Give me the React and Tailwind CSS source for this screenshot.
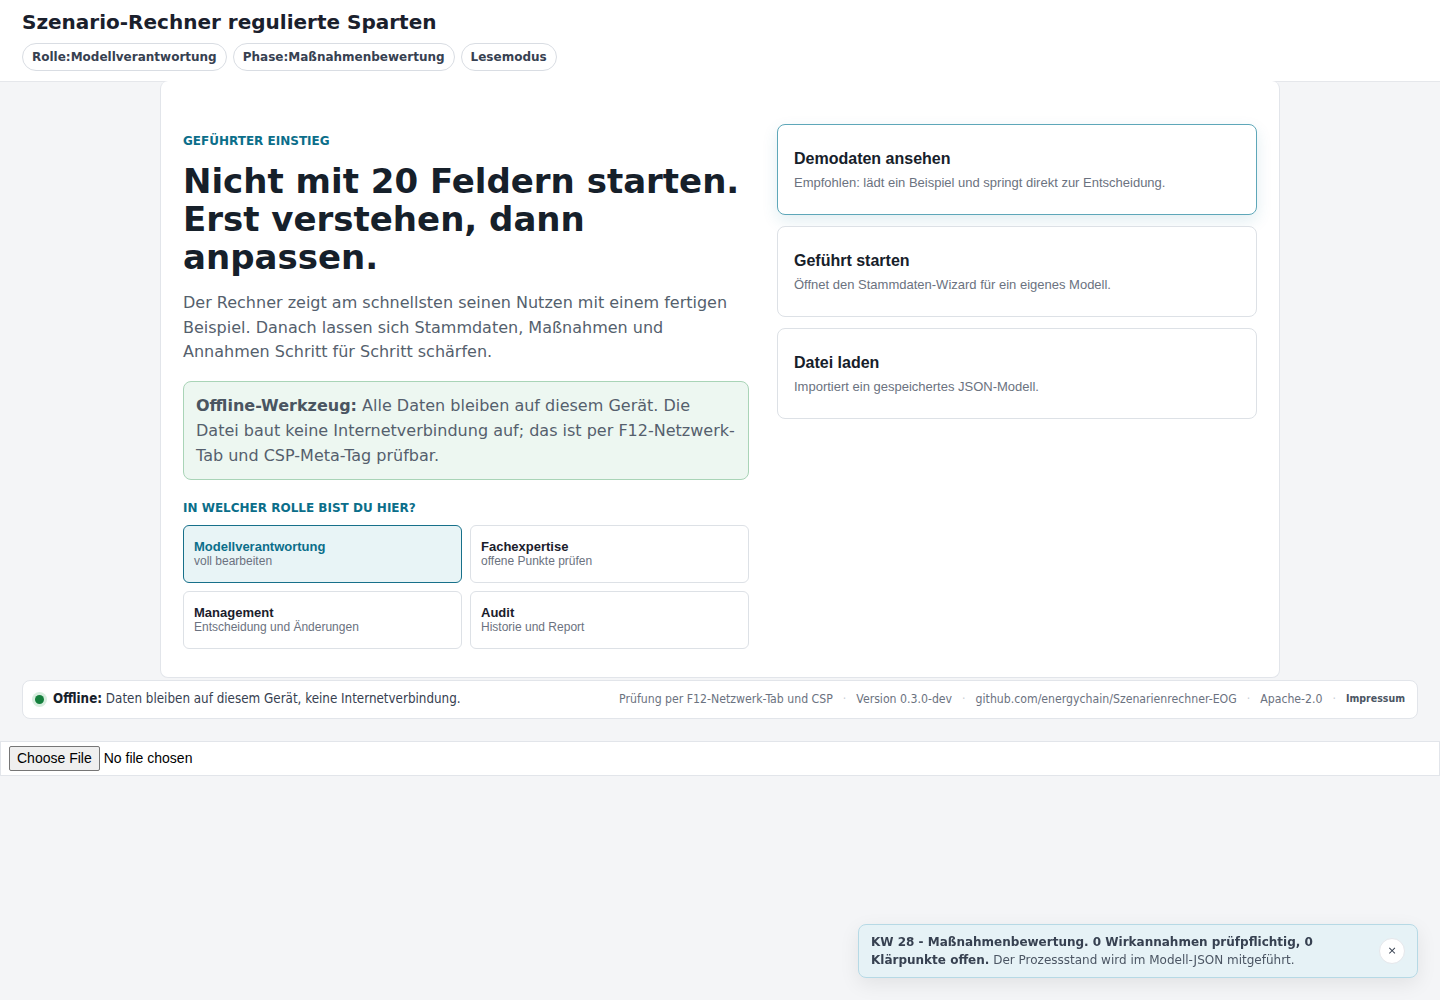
import React from "react";

const roles = [
  { title: "Modellverantwortung", desc: "voll bearbeiten", active: true },
  { title: "Fachexpertise", desc: "offene Punkte prüfen" },
  { title: "Management", desc: "Entscheidung und Änderungen" },
  { title: "Audit", desc: "Historie und Report" },
];

const starts = [
  { title: "Demodaten ansehen", desc: "Empfohlen: lädt ein Beispiel und springt direkt zur Entscheidung.", primary: true },
  { title: "Geführt starten", desc: "Öffnet den Stammdaten-Wizard für ein eigenes Modell." },
  { title: "Datei laden", desc: "Importiert ein gespeichertes JSON-Modell." },
];

const footerLinks = [
  "Prüfung per F12-Netzwerk-Tab und CSP",
  "Version 0.3.0-dev",
  "github.com/energychain/Szenarienrechner-EOG",
  "Apache-2.0",
];

const App = () => {
  return (
    <div className="min-h-[1000px] bg-[#f4f5f7] font-['DejaVu_Sans',sans-serif] text-[#1f2933]">
      {/* Kopfzeile */}
      <header className="h-[82px] border-b border-[#e5e7eb] bg-white px-[22px] pt-[9px]">
        <h1 className="text-[20px] font-bold leading-[26px] text-[#1a202c]">
          Szenario-Rechner regulierte Sparten
        </h1>
        <div className="mt-[8px] flex gap-[6px]">
          {["Rolle:Modellverantwortung", "Phase:Maßnahmenbewertung", "Lesemodus"].map((p) => (
            <span
              key={p}
              className="rounded-full border border-[#d9dde3] bg-white px-[9px] py-[5px] text-[12px] font-bold leading-[16px] text-[#374151]"
            >
              {p}
            </span>
          ))}
        </div>
      </header>

      {/* Einstieg */}
      <main className="mx-auto -mt-px w-[1120px] rounded-lg border border-t-0 border-[#e2e5ea] bg-white px-[22px] pb-[28px] pt-[43px]">
        <div className="grid grid-cols-[566px_480px] gap-[28px]">
          <section className="pt-[9px]">
            <p className="text-[12px] font-bold uppercase leading-[16px] text-[#0b6e8a]">
              Geführter Einstieg
            </p>
            <h2 className="mt-[13px] text-[34px] font-bold leading-[38px] text-[#16202a]">
              Nicht mit 20 Feldern starten. Erst verstehen, dann anpassen.
            </h2>
            <p className="mt-[15px] text-[16px] leading-[24.5px] text-[#555f6d]">
              Der Rechner zeigt am schnellsten seinen Nutzen mit einem fertigen Beispiel. Danach lassen sich
              Stammdaten, Maßnahmen und Annahmen Schritt für Schritt schärfen.
            </p>
            <div className="mt-[16px] rounded-lg border border-[#a9d4b7] bg-[#edf7f1] px-[12px] py-[11px] text-[16px] leading-[25px] text-[#555f6d]">
              <strong className="text-[#4a5561]">Offline-Werkzeug:</strong> Alle Daten bleiben auf diesem Gerät.
              Die Datei baut keine Internetverbindung auf; das ist per F12-Netzwerk-Tab und CSP-Meta-Tag prüfbar.
            </div>
            <p className="mt-[20px] text-[12px] font-bold uppercase leading-[16px] text-[#0b6e8a]">
              In welcher Rolle bist du hier?
            </p>
            <div className="mt-[9px] grid grid-cols-2 gap-[8px]">
              {roles.map((r) => (
                <button
                  key={r.title}
                  className={
                    r.active
                      ? "h-[58px] rounded-md border border-[#17708a] bg-[#e8f4f6] px-[10px] text-left font-['Liberation_Sans',Arial,sans-serif]"
                      : "h-[58px] rounded-md border border-[#dde1e6] bg-white px-[10px] text-left font-['Liberation_Sans',Arial,sans-serif]"
                  }
                >
                  <div
                    className={
                      r.active
                        ? "text-[13px] font-bold leading-[14px] text-[#0b6e8a]"
                        : "text-[13px] font-bold leading-[14px] text-[#1a202c]"
                    }
                  >
                    {r.title}
                  </div>
                  <div className="text-[12px] leading-[14px] text-[#6b7280]">{r.desc}</div>
                </button>
              ))}
            </div>
          </section>

          <section className="flex flex-col gap-[11px]">
            {starts.map((s) => (
              <button
                key={s.title}
                className={
                  s.primary
                    ? "h-[91px] rounded-lg border border-[#5ea7b9] bg-white px-[16px] text-left font-['Liberation_Sans',Arial,sans-serif] shadow-[0_6px_16px_rgba(14,116,144,0.12)]"
                    : "h-[91px] rounded-lg border border-[#dde1e6] bg-white px-[16px] text-left font-['Liberation_Sans',Arial,sans-serif]"
                }
              >
                <div className="text-[16px] font-bold leading-[20px] text-[#16202a]">{s.title}</div>
                <div className="mt-[6px] text-[13px] leading-[16px] text-[#6b7280]">{s.desc}</div>
              </button>
            ))}
          </section>
        </div>
      </main>

      {/* Statusleiste */}
      <footer className="mx-[22px] mt-[2px] flex h-[39px] items-center justify-between rounded-lg border border-[#e2e5ea] bg-white px-[12px] font-['DejaVu_Sans_Condensed','DejaVu_Sans',sans-serif]">
        <div className="flex items-center gap-[9px] text-[13.3px] text-[#374151]">
          <span className="h-[9px] w-[9px] rounded-full bg-[#15803d] ring-[3px] ring-[#d8eedf]" />
          <span>
            <strong className="text-[#16202a]">Offline:</strong> Daten bleiben auf diesem Gerät, keine Internetverbindung.
          </span>
        </div>
        <div className="flex items-center gap-[10px] text-[12.2px] text-[#6b7280]">
          {footerLinks.map((l) => (
            <React.Fragment key={l}>
              <span>{l}</span>
              <span className="text-[#c8cdd4]">·</span>
            </React.Fragment>
          ))}
          <span className="text-[10.5px] font-bold text-[#4b5563]">Impressum</span>
        </div>
      </footer>

      {/* Datei-Eingabe */}
      <div className="mt-[22px] flex h-[35px] items-center border border-[#e2e5ea] bg-white px-[8px] font-['Liberation_Sans',Arial,sans-serif] text-[14px] text-black">
        <input type="file" className="text-[14px] file:mr-[4px] file:rounded-[2px] file:border file:border-[#767676] file:bg-[#efefef] file:px-[7px] file:py-[1px] file:text-[14px]" />
      </div>

      {/* Hinweis */}
      <div className="fixed bottom-[22px] right-[22px] flex w-[560px] items-center justify-between rounded-lg border border-[#b6d9e5] bg-[#e6f2f6] py-[8px] pl-[12px] pr-[12px] shadow-[0_6px_20px_rgba(0,0,0,0.08)]">
        <p className="text-[12px] leading-[18px] text-[#4b5563]">
          <strong className="text-[#374151]">
            KW 28 - Maßnahmenbewertung. 0 Wirkannahmen prüfpflichtig, 0 Klärpunkte offen.
          </strong>{" "}
          Der Prozessstand wird im Modell-JSON mitgeführt.
        </p>
        <button className="flex h-[26px] w-[26px] shrink-0 items-center justify-center rounded-full border border-[#e5e7eb] bg-white text-[11px] text-[#374151]">
          ×
        </button>
      </div>
    </div>
  );
};

export default App;
